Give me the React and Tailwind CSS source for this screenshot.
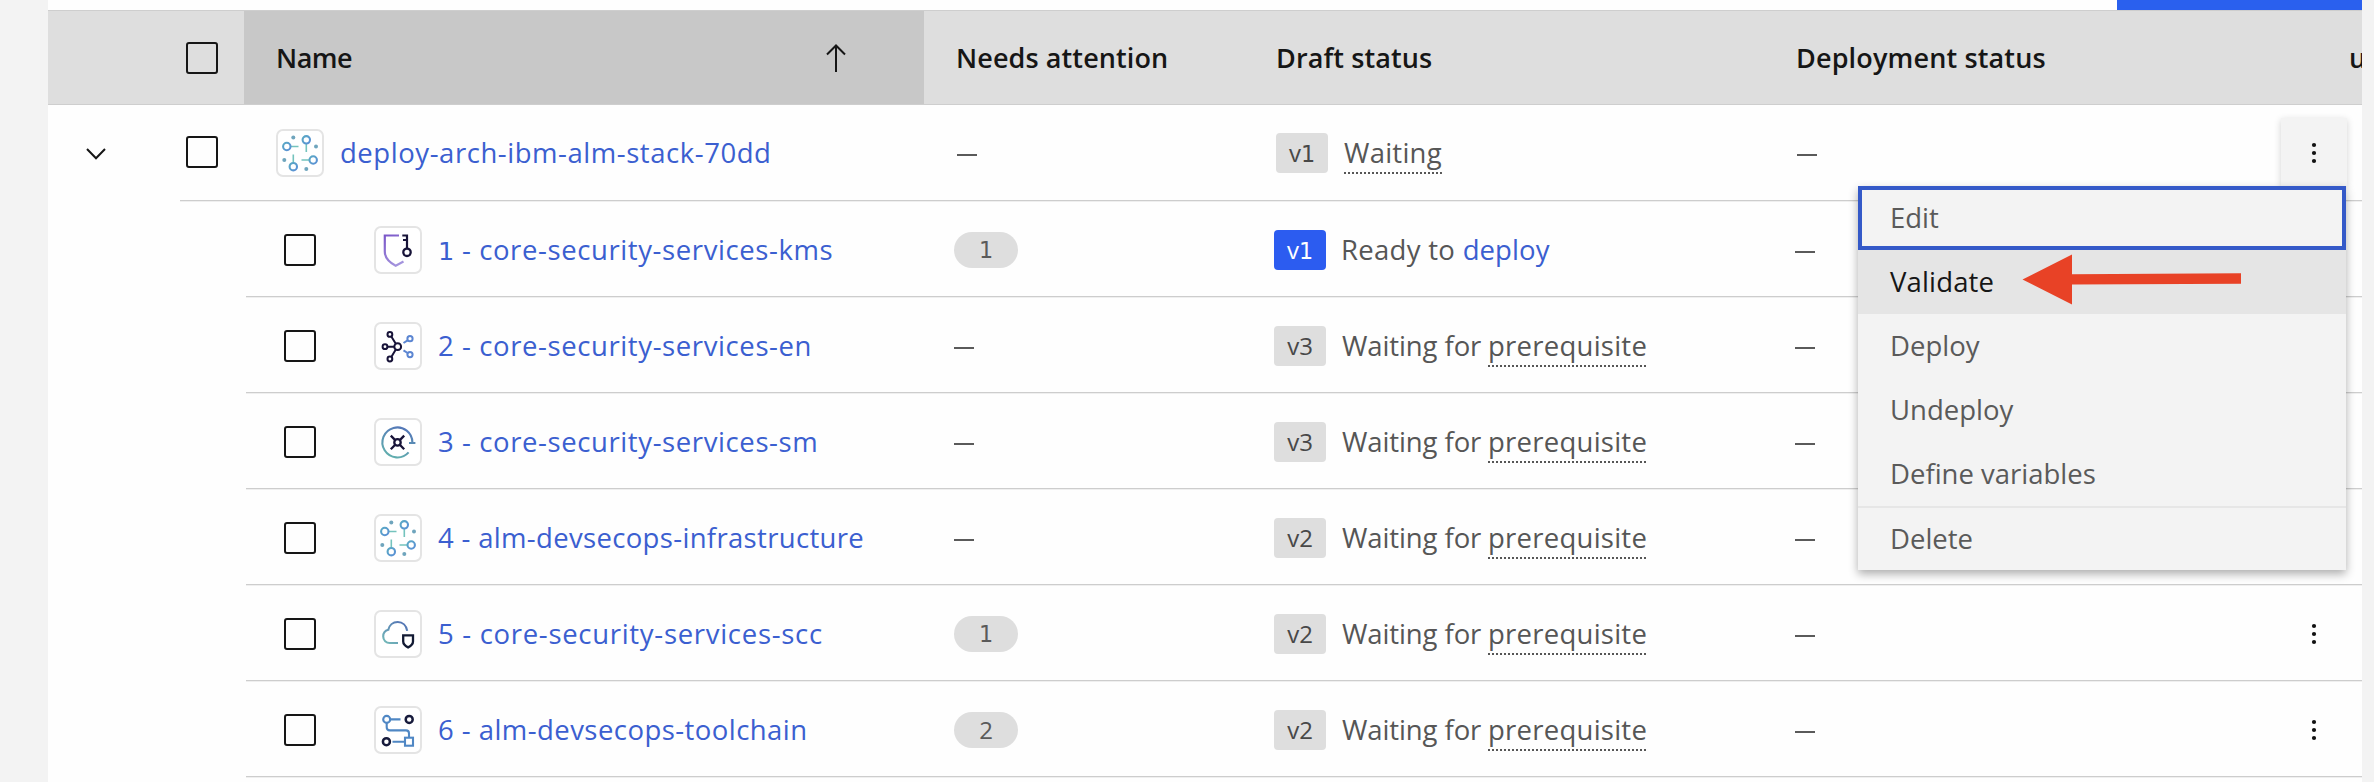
const LINK = "text-[#3b5fd0]";

/* Figure one with a foot serif */
function One() {
  return <span className="font-['DejaVu_Sans',sans-serif] text-[0.93em] tracking-normal">1</span>;
}

function withFooting(text) {
  return text.split("1").flatMap((part, i) => (i === 0 ? [part] : [<One key={i} />, part]));
}

function Checkbox({ className = "" }) {
  return <span className={`block size-8 shrink-0 rounded-[3px] border-2 border-[#161616] ${className}`} />;
}

function Glyph({ children }) {
  return (
    <span className="block size-12 shrink-0 rounded-[7px] border-2 border-[#e4e4e4] bg-white">
      <svg viewBox="2 2 44 44" className="block size-11" fill="none" strokeWidth="1.9">
        {children}
      </svg>
    </span>
  );
}

function ArchIcon({ id }) {
  return (
    <Glyph>
      <defs>
        <linearGradient id={id} x1="0" y1="0" x2="1" y2="1" gradientUnits="objectBoundingBox">
          <stop offset="0" stopColor="#5aa9c4" />
          <stop offset="1" stopColor="#5a8fd6" />
        </linearGradient>
      </defs>
      <g stroke="#74c3bd" strokeWidth="1.6">
        <path d="M30.3 14.5V23M14.5 17.5H22.5M33.5 31H25.5M17.3 34V25.5" />
      </g>
      <g stroke={`url(#${id})`} strokeWidth="2.1">
        <circle cx="30.3" cy="10.8" r="3.7" />
        <circle cx="10.8" cy="17.5" r="3.7" />
        <circle cx="37.2" cy="31" r="3.7" />
        <circle cx="17.3" cy="37.7" r="3.7" />
      </g>
      <g fill="#6fa5bd">
        <circle cx="17.3" cy="8.5" r="2" />
        <circle cx="40" cy="17.5" r="2" />
        <circle cx="8.3" cy="31" r="2" />
        <circle cx="30.3" cy="40" r="2" />
      </g>
    </Glyph>
  );
}

function KeyIcon() {
  return (
    <Glyph>
      <defs>
        <linearGradient id="shield" x1="10" y1="9" x2="30" y2="40" gradientUnits="userSpaceOnUse">
          <stop offset="0" stopColor="#7a56c8" />
          <stop offset="1" stopColor="#a99be0" />
        </linearGradient>
      </defs>
      <path d="M25 9.5H10.8V25.5C10.8 32.5 15.5 36.5 21.7 39.7L29.5 35.5" stroke="url(#shield)" strokeWidth="2.2" />
      <path d="M28.3 9.5H33V22.5M29 14H33" stroke="#171338" strokeWidth="2.2" />
      <circle cx="33" cy="26.3" r="3.7" stroke="#171338" strokeWidth="2.3" />
    </Glyph>
  );
}

function EventIcon() {
  return (
    <Glyph>
      <g stroke="#171338" strokeWidth="2">
        <circle cx="23.7" cy="24.7" r="3.4" />
        <circle cx="15.9" cy="12.4" r="2.4" />
        <circle cx="11" cy="24.7" r="2.4" />
        <circle cx="15.9" cy="37" r="2.4" />
        <path d="M17.3 14.5L21.8 21.8M13.5 24.7H20.2M17.3 34.9L21.8 27.6" />
      </g>
      <g stroke="#5c86d2" strokeWidth="2">
        <circle cx="36" cy="16.7" r="2.6" />
        <circle cx="36" cy="32.6" r="2.6" />
        <path d="M33.6 18.3L29.5 21M33.6 31L29.5 28.3" />
      </g>
    </Glyph>
  );
}

function SecretsIcon() {
  return (
    <Glyph>
      <defs>
        <linearGradient id="ring" x1="30" y1="9" x2="18" y2="40" gradientUnits="userSpaceOnUse">
          <stop offset="0" stopColor="#5476b8" />
          <stop offset="1" stopColor="#62b0ae" />
        </linearGradient>
      </defs>
      <path d="M38.4 24.8A15 15 0 1 0 34.6 34.4M35 25H41.4" stroke="url(#ring)" strokeWidth="2.1" />
      <g stroke="#171338" strokeWidth="2.3">
        <circle cx="23.5" cy="24.4" r="3.2" />
        <path d="M21.2 22.1L16.8 17.6M25.8 22.1L30.2 17.6M21.2 26.7L16.8 31.2M25.8 26.7L30.2 31.2" />
      </g>
    </Glyph>
  );
}

function CloudIcon() {
  return (
    <Glyph>
      <defs>
        <linearGradient id="cloud" x1="30" y1="11" x2="14" y2="34" gradientUnits="userSpaceOnUse">
          <stop offset="0" stopColor="#5170b4" />
          <stop offset="1" stopColor="#72b6b8" />
        </linearGradient>
      </defs>
      <path d="M33.2 20.8C32.4 15.5 28.6 12 23.7 12C18.8 12 15.2 15.3 14.3 19.8C11.2 20.6 9.2 23.4 9.2 26.5C9.2 30.3 12.2 33 15.8 33H24" stroke="url(#cloud)" strokeWidth="2.1" />
      <path d="M29.2 25.4H39V31.5C39 34.5 37 36 34.1 37.4C31.2 36 29.2 34.5 29.2 31.5Z" stroke="#121a33" strokeWidth="2.3" />
    </Glyph>
  );
}

function ToolchainIcon() {
  return (
    <Glyph>
      <g stroke="#4f87c4" strokeWidth="2.1">
        <circle cx="12.7" cy="13.4" r="3.5" />
        <path d="M16.2 13.4H26.5M12.7 17V21.3Q12.7 24.4 15.8 24.4H32Q35 24.4 35 27.5V31.5M18.5 35.7H30.7" />
        <rect x="31" y="31.7" width="8" height="8" />
      </g>
      <g stroke="#171b3c" strokeWidth="2.5">
        <circle cx="35.2" cy="13.4" r="3.5" />
        <circle cx="12.4" cy="35.7" r="3.5" />
      </g>
    </Glyph>
  );
}

function Kebab() {
  return (
    <svg viewBox="0 0 8 24" className="h-6 w-2" fill="#111">
      <circle cx="4" cy="4" r="2.1" />
      <circle cx="4" cy="12" r="2.1" />
      <circle cx="4" cy="20" r="2.1" />
    </svg>
  );
}

function Dash() {
  return <span className="mt-[3px] block h-[2px] w-5 bg-[#5a5a5a]" />;
}

function Version({ children, active }) {
  return (
    <span
      className={`flex h-10 w-[52px] shrink-0 items-center justify-center rounded-[4px] text-[24px] ${
        active ? "bg-[#2c5cf0] text-white" : "bg-[#dedede] text-[#484848]"
      }`}
    >
      <span>{withFooting(children)}</span>
    </span>
  );
}

function Count({ children }) {
  return (
    <span className="flex h-9 w-16 items-center justify-center rounded-full bg-[#dedede] text-[24px] text-[#5a5a5a]">
      {withFooting(children)}
    </span>
  );
}

const DOTTED =
  "h-[38px] leading-[33px] mt-[3px] bg-[repeating-linear-gradient(90deg,#565656_0_2px,transparent_2px_4px)] bg-[length:100%_2px] bg-bottom bg-no-repeat";

const CHILDREN = [
  { name: "1 - core-security-services-kms", track: "tracking-[0.6px]", Icon: KeyIcon, count: "1", version: "v1", ready: true },
  { name: "2 - core-security-services-en", track: "tracking-[0.6px]", Icon: EventIcon, version: "v3" },
  { name: "3 - core-security-services-sm", track: "tracking-[0.6px]", Icon: SecretsIcon, version: "v3" },
  { name: "4 - alm-devsecops-infrastructure", track: "tracking-[0.33px]", Icon: ArchIcon, version: "v2" },
  { name: "5 - core-security-services-scc", track: "tracking-[0.7px]", Icon: CloudIcon, count: "1", version: "v2" },
  { name: "6 - alm-devsecops-toolchain", track: "tracking-[0.45px]", Icon: ToolchainIcon, count: "2", version: "v2" },
];

function ChildRow({ name, track, Icon, count, version, ready }) {
  return (
    <div className="flex h-24 pl-[198px]">
      <div className="flex flex-1 items-center border-b border-[#cdcdcd] pt-[3px] shadow-[0_1px_0_#efefef]">
        <div className="w-[128px] pl-[38px]">
          <Checkbox />
        </div>
        <div className="flex w-[580px] items-center gap-4">
          <Icon id="arch-child" />
          <span className={`${LINK} ${track} whitespace-nowrap`}>{withFooting(name)}</span>
        </div>
        <div className="w-[320px]">{count ? <Count>{count}</Count> : <Dash />}</div>
        <div className="flex w-[521px] items-center gap-4">
          <Version active={ready}>{version}</Version>
          {ready ? (
            <span className="-ml-px whitespace-pre tracking-[0.3px]">
              Ready to <span className={`${LINK} tracking-[0.1px]`}>deploy</span>
            </span>
          ) : (
            <span className="flex items-center whitespace-pre">
              <span className="w-[146px] tracking-[-0.1px]">Waiting for </span>
              <span className={`${DOTTED} tracking-[0.25px]`}>prerequisite</span>
            </span>
          )}
        </div>
        <Dash />
        <div className="mr-[15px] ml-auto flex w-[66px] justify-center">
          <Kebab />
        </div>
      </div>
    </div>
  );
}

function MenuItem({ children, className = "" }) {
  return <div className={`flex h-16 items-center pl-8 ${className}`}>{children}</div>;
}

function ActionMenu() {
  return (
    <div className="absolute top-[68px] right-px z-10 w-[488px] bg-[#f3f3f3] text-[#5a5a5a] shadow-[0_4px_9px_rgba(0,0,0,0.32)]">
      <MenuItem className="border-4 border-[#3459c8] pl-7!">Edit</MenuItem>
      <MenuItem className="relative bg-[#e5e5e5] tracking-[0.15px] text-[#161616]">
        Validate
        <svg viewBox="0 0 220 52" className="absolute top-[4px] left-[164px] h-[52px] w-[220px]" fill="#e84226">
          <path d="M0.5 25.5L50 0.5V20.3L219 19.3V29.7L50 30.5V50.5Z" />
        </svg>
      </MenuItem>
      <MenuItem>Deploy</MenuItem>
      <MenuItem>Undeploy</MenuItem>
      <MenuItem>Define variables</MenuItem>
      <MenuItem className="border-t-2 border-[#e6e6e6]">Delete</MenuItem>
    </div>
  );
}

function ParentRow() {
  return (
    <div className="flex h-24">
      <div className="flex w-[132px] items-center pt-px pl-[38px]">
        <svg viewBox="0 0 20 12" className="h-3 w-5" fill="none" stroke="#161616" strokeWidth="2">
          <path d="M1 1L10 10.3L19 1" />
        </svg>
      </div>
      <div className="flex flex-1 items-center border-b border-[#cdcdcd] pt-px shadow-[0_1px_0_#efefef]">
        <div className="w-24 pl-1.5">
          <Checkbox className="mb-[2px]" />
        </div>
        <div className="flex w-[681px] items-center gap-4">
          <ArchIcon id="arch-parent" />
          <span className={`${LINK} tracking-[0.55px] whitespace-nowrap`}>deploy-arch-ibm-alm-stack-70dd</span>
        </div>
        <div className="w-[319px]">
          <Dash />
        </div>
        <div className="flex w-[521px] items-center gap-4">
          <Version>v1</Version>
          <span className={`${DOTTED} tracking-[0.25px]`}>Waiting</span>
        </div>
        <Dash />
        <div className="relative mt-3 mr-[15px] ml-auto h-[68px] w-[66px] self-start">
          <div className="flex h-full items-center justify-center bg-[#f3f3f3] pt-[2px] shadow-[0_2px_7px_rgba(0,0,0,0.18)]">
            <Kebab />
          </div>
          <ActionMenu />
        </div>
      </div>
    </div>
  );
}

function Header() {
  return (
    <div className="flex h-[95px] items-center overflow-hidden border-y border-[#cecece] bg-[#dedede] text-[27px] font-semibold text-[#161616]">
      <div className="w-[196px] shrink-0 pl-[138px]">
        <Checkbox />
      </div>
      <div className="flex h-[95px] w-[680px] shrink-0 items-center bg-[#c8c8c8] pr-[78px] pl-8">
        <span className="tracking-[-0.5px]">Name</span>
        <svg viewBox="0 0 20 28" className="ml-auto h-7 w-5" fill="none" stroke="#161616" strokeWidth="2">
          <path d="M10 28V1.5M1 10.5L10 1.5L19 10.5" />
        </svg>
      </div>
      <div className="w-[352px] shrink-0 pl-8 tracking-[0.1px]">Needs attention</div>
      <div className="w-[520px] shrink-0 tracking-[0.1px]">Draft status</div>
      <div className="w-[553px] shrink-0 tracking-[0.15px]">Deployment status</div>
      <div className="shrink-0">u</div>
    </div>
  );
}

export default function App() {
  return (
    <div className="h-[782px] w-[2374px] overflow-hidden bg-[#f3f3f3] pr-3 pl-12 font-['Open_Sans',sans-serif] text-[27.5px] leading-9 text-[#565656]">
      <div className="h-full bg-[#fefefe]">
        <div className="flex h-2.5 justify-end">
          <div className="w-[245px] bg-[#2a60ee]" />
        </div>
        <Header />
        <ParentRow />
        {CHILDREN.map((row) => (
          <ChildRow key={row.name} {...row} />
        ))}
      </div>
    </div>
  );
}
